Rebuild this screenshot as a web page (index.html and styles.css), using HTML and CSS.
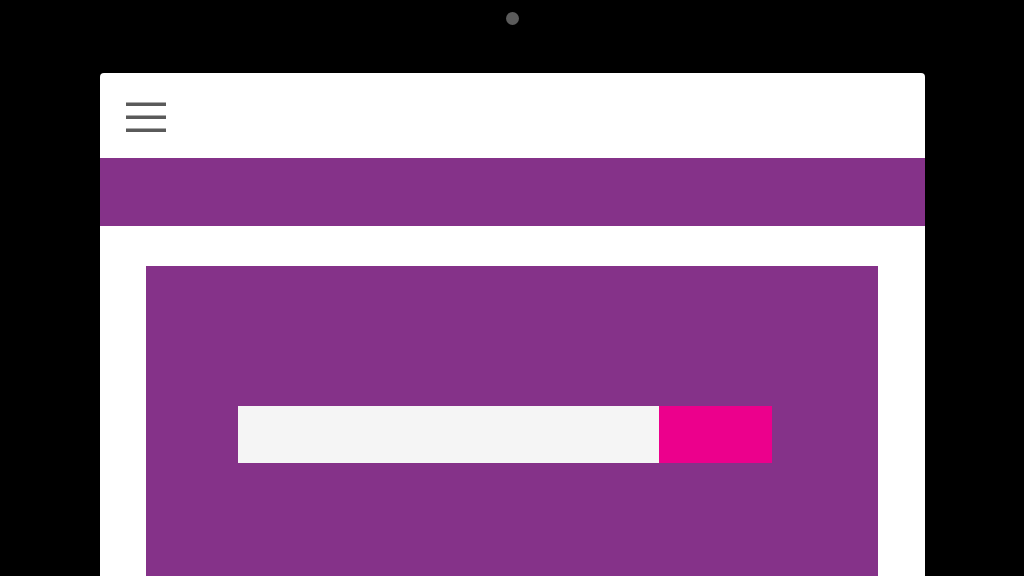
FILE: index.html
```html
<!DOCTYPE html>
<html>
<head>
<meta charset="utf-8">
<link rel="stylesheet" href="styles.css">
</head>
<body>
<div class="device">
  <div class="camera"></div>
  <div class="screen">
    <header class="topbar">
      <svg class="menu" width="40" height="30" viewBox="0 0 40 30">
        <rect x="0" y="0.5" width="40" height="3.5" fill="#5a5a5a"/>
        <rect x="0" y="13.5" width="40" height="3.5" fill="#5a5a5a"/>
        <rect x="0" y="26.5" width="40" height="3.5" fill="#5a5a5a"/>
      </svg>
    </header>
    <div class="banner"></div>
    <main class="content">
      <section class="hero">
        <div class="search">
          <div class="field"></div>
          <div class="button"></div>
        </div>
      </section>
    </main>
  </div>
</div>
</body>
</html>
```
FILE: styles.css
```css
html, body {
  margin: 0;
  padding: 0;
  background: #000;
  height: 576px;
  overflow: hidden;
  font-family: "Liberation Sans", Arial, sans-serif;
}
.device {
  display: flex;
  flex-direction: column;
  align-items: center;
  padding-top: 12px;
  height: 576px;
  box-sizing: border-box;
}
.camera {
  width: 13px;
  height: 13px;
  border-radius: 50%;
  background: #5b5b5b;
}
.screen {
  margin-top: 48px;
  width: 825px;
  margin-left: 1px;
  flex: 1;
  background: #fff;
  border-radius: 4px 4px 0 0;
  display: flex;
  flex-direction: column;
}
.topbar {
  height: 85px;
  display: flex;
  align-items: center;
  padding-left: 26px;
  box-sizing: border-box;
  padding-top: 2px;
}
.menu {
  display: block;
}
.banner {
  height: 68px;
  background: #853289;
}
.content {
  padding: 40px 47px 0 46px;
  flex: 1;
  display: flex;
}
.hero {
  flex: 1;
  background: #853289;
  padding-top: 140px;
  padding-left: 92px;
}
.search {
  display: flex;
  height: 57px;
}
.field {
  width: 421px;
  background: #f5f5f5;
}
.button {
  width: 113px;
  background: #ec008c;
}
```
